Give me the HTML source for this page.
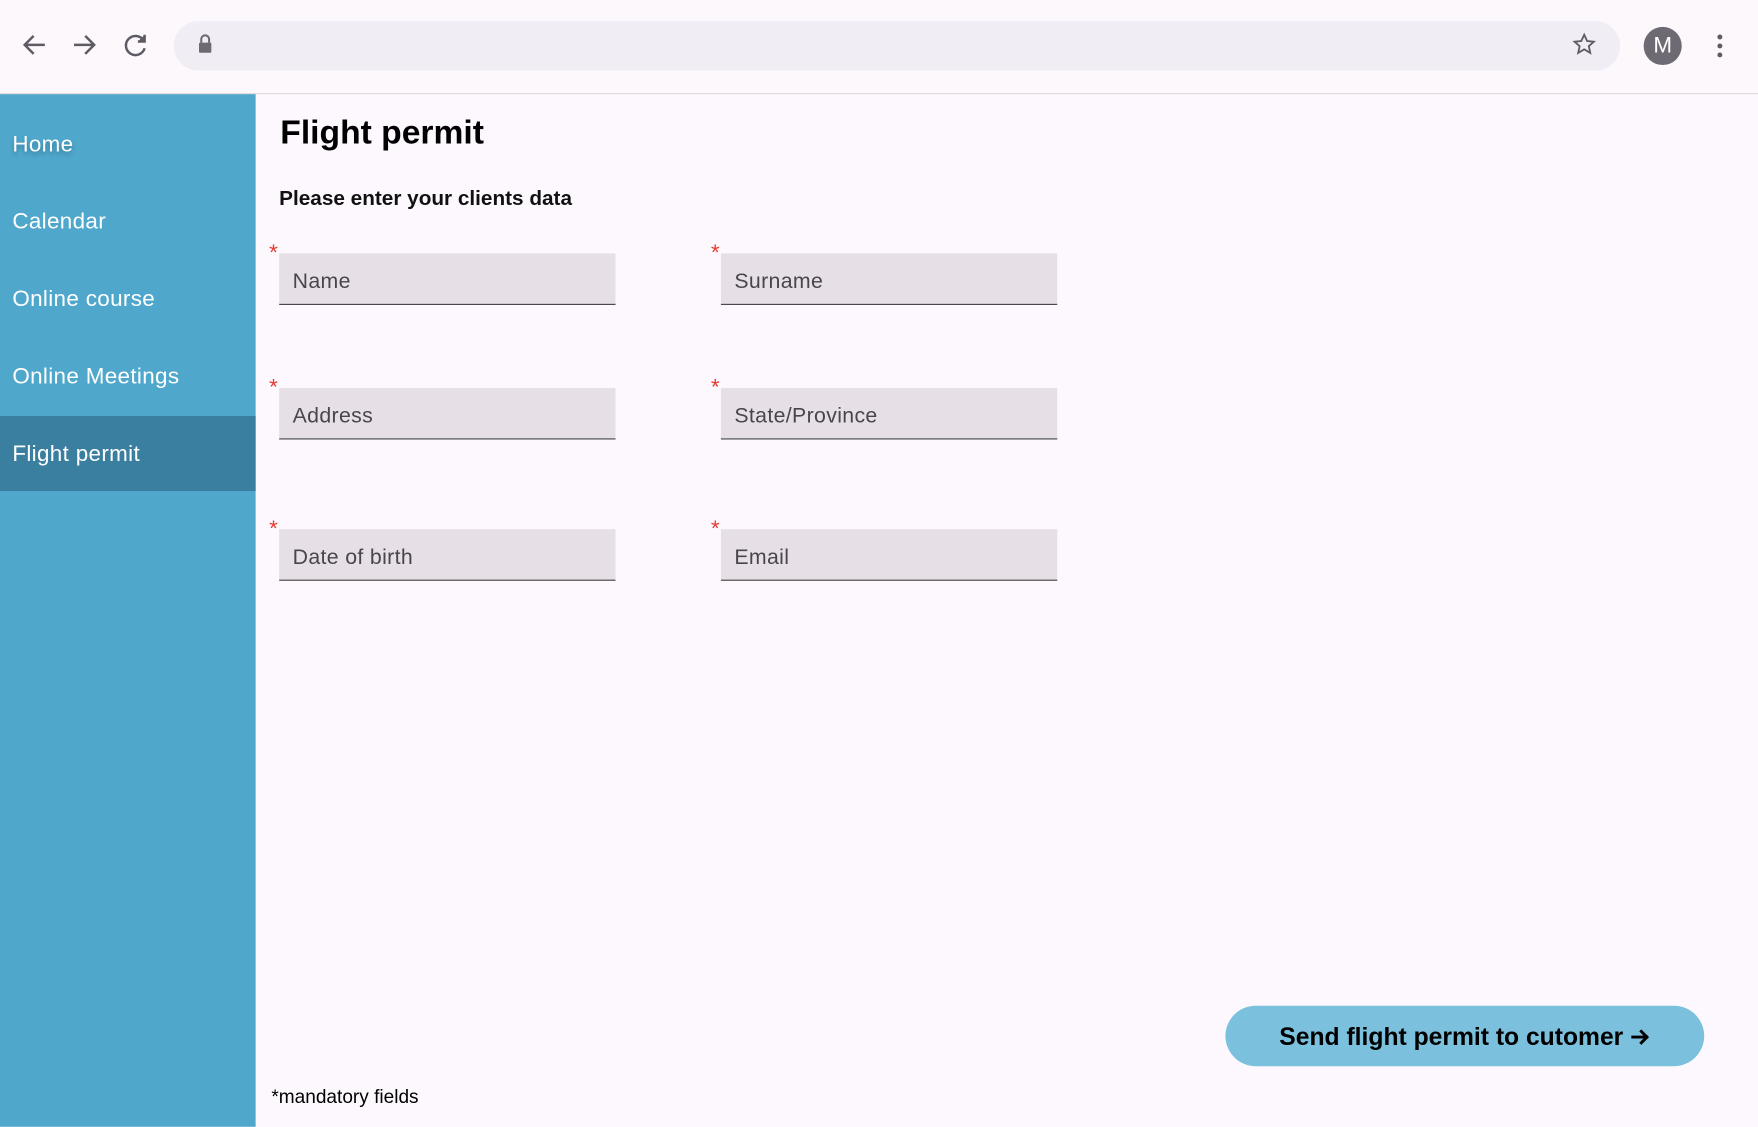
<!DOCTYPE html>
<html><head><meta charset="utf-8"><style>
html,body{margin:0;padding:0;width:1758px;height:1126px;overflow:hidden;background:#fdf8fd;font-family:"Liberation Sans",sans-serif}
#w{position:absolute;left:0;top:0;width:1568px;height:1005px;transform:scale(1.12117);transform-origin:0 0}
.a{position:absolute}
.tb{left:0;top:0;width:1568px;height:83px;background:#fcf8fc;border-bottom:1px solid #dcd8dc}
.url{left:155px;top:19px;width:1290px;height:44px;border-radius:22px;background:#f1edf5}
.side{left:0;top:84px;width:228px;height:921px;background:#4fa7cc}
.sel{left:0;top:371px;width:228px;height:67px;background:#3a7fa0}
.nav{left:11px;color:#fff;font-size:20px;letter-spacing:.3px;line-height:24px}
.f{width:300px;height:45px;background:#e6e0e6;border-bottom:1.5px solid #444}
.f span{position:absolute;left:12px;top:15px;font-size:19px;color:#4a454d;letter-spacing:.3px}
.st{color:#e53a2e;font-size:20px;line-height:20px}
</style></head><body><div id="w">
<div class="a tb"></div>
<div class="a url"></div>
<svg class="a" style="left:0;top:0" width="1568" height="83" fill="none" stroke="#5f5b64" stroke-width="2.2">
<path d="M40 40H22M30 32l-8 8 8 8"/>
<path d="M66 40h18M76 32l8 8-8 8"/>
<path d="M128 36a8.5 8.5 0 1 0 1 7" /><path d="M129 31v6h-6" fill="#5f5b64"/>
<rect x="177.5" y="38" width="11" height="9" rx="1" fill="#6e6a73" stroke="none"/>
<path d="M179.5 38v-3a3.5 3.5 0 0 1 7 0v3" stroke="#6e6a73" stroke-width="1.8"/>
<path d="M1413 31l2.6 5.6 6 .6-4.5 4 1.3 6-5.4-3.2-5.4 3.2 1.3-6-4.5-4 6-.6z" stroke-width="1.6"/>
<circle cx="1483" cy="41" r="17" fill="#6e6a73" stroke="none"/>
<circle cx="1534" cy="33" r="2.2" fill="#5f5b64" stroke="none"/><circle cx="1534" cy="41" r="2.2" fill="#5f5b64" stroke="none"/><circle cx="1534" cy="49" r="2.2" fill="#5f5b64" stroke="none"/>
</svg>
<div class="a" style="left:1466px;top:30px;width:34px;text-align:center;color:#fff;font-size:20px">M</div>
<div class="a side"></div><div class="a sel"></div>
<div class="a nav" style="top:117px;text-shadow:0 3px 4px rgba(0,0,0,.25)">Home</div>
<div class="a nav" style="top:186px">Calendar</div>
<div class="a nav" style="top:255px">Online course</div>
<div class="a nav" style="top:324px">Online Meetings</div>
<div class="a nav" style="top:393px">Flight permit</div>
<div class="a" style="left:250px;top:102px;font-size:30px;font-weight:bold;color:#000">Flight permit</div>
<div class="a" style="left:249px;top:166px;font-size:18.5px;font-weight:bold;color:#111">Please enter your clients data</div>
<div class="a st" style="left:240px;top:216px">*</div><div class="a f" style="left:249px;top:226px"><span>Name</span></div>
<div class="a st" style="left:634px;top:216px">*</div><div class="a f" style="left:643px;top:226px"><span>Surname</span></div>
<div class="a st" style="left:240px;top:336px">*</div><div class="a f" style="left:249px;top:346px"><span>Address</span></div>
<div class="a st" style="left:634px;top:336px">*</div><div class="a f" style="left:643px;top:346px"><span>State/Province</span></div>
<div class="a st" style="left:240px;top:462px">*</div><div class="a f" style="left:249px;top:472px"><span>Date of birth</span></div>
<div class="a st" style="left:634px;top:462px">*</div><div class="a f" style="left:643px;top:472px"><span>Email</span></div>
<div class="a" style="left:1093px;top:897px;width:427px;height:54px;border-radius:27px;background:#7bc0dc;text-align:center;line-height:56px;font-size:22px;font-weight:bold;color:#000">Send flight permit to cutomer <svg width="18" height="16" viewBox="0 0 18 16" style="vertical-align:-1px"><path d="M1 8h15M9 2l6 6-6 6" fill="none" stroke="#000" stroke-width="2.6"/></svg></div>
<div class="a" style="left:242px;top:969px;font-size:17px;color:#000">*mandatory fields</div>
</div></body></html>
